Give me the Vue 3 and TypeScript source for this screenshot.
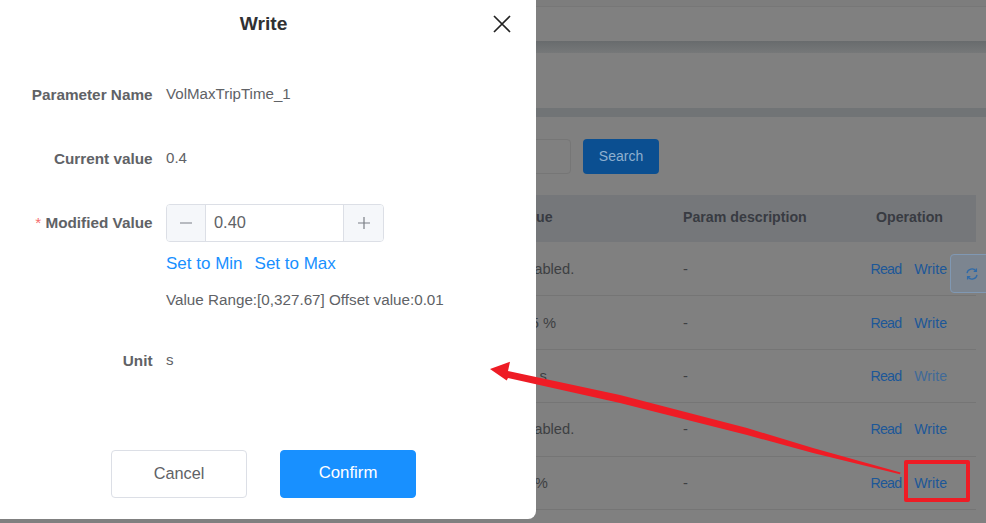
<script setup lang="ts">
interface Row { value: string; indent: number; writeClass: string }
const rows: Row[] = [
  { value: 'Not enabled.', indent: 22, writeClass: '' },
  { value: '110.05 %', indent: 26, writeClass: '' },
  { value: '10.000 s', indent: 21.5, writeClass: 'faded' },
  { value: 'Not enabled.', indent: 22, writeClass: '' },
  { value: '110.0 %', indent: 26, writeClass: '' },
]
</script>

<template>
  <div class="page">
    <div class="backdrop">
      <div class="topbar"></div>
      <div class="band band-a"></div>
      <div class="tabs"></div>
      <div class="band band-b"></div>
      <div class="content">
        <div class="search">
          <div class="search-input"></div>
          <div class="search-btn">Search</div>
        </div>
        <div class="table">
          <div class="tr th">
            <span>Param value</span>
            <span>Param description</span>
            <span class="op-head">Operation</span>
          </div>
          <div v-for="(row, i) in rows" :key="i" class="tr td">
            <span :style="{ paddingLeft: row.indent + 'px' }">{{ row.value }}</span>
            <span>-</span>
            <span class="ops">
              <a class="read">Read</a>
              <a :class="row.writeClass">Write</a>
            </span>
          </div>
        </div>
      </div>
    </div>

    <div class="refresh">
      <svg width="14" height="14" viewBox="0 0 14 14" fill="none" stroke="#2f6aa8" stroke-width="1.3">
        <path d="M2 6.2A5 5 0 0 1 11 4" />
        <path d="M11.4 1.6V4.4H8.7" />
        <path d="M12 7.8A5 5 0 0 1 3 10" />
        <path d="M2.6 12.4V9.6H5.3" />
      </svg>
    </div>

    <section class="dialog">
      <header class="d-head">
        <h2>Write</h2>
        <button class="close" aria-label="Close">
          <svg width="18" height="18" viewBox="0 0 18 18" fill="none" stroke="#222" stroke-width="1.7">
            <path d="M1 1L17 17M17 1L1 17" />
          </svg>
        </button>
      </header>

      <div class="form">
        <div class="row row-name">
          <label>Parameter Name</label>
          <div class="val">VolMaxTripTime_1</div>
        </div>
        <div class="row row-current">
          <label>Current value</label>
          <div class="val">0.4</div>
        </div>
        <div class="row row-mod">
          <label class="mod-label"><i>*</i> Modified Value</label>
          <div class="mod">
            <div class="num">
              <span class="step step-l">
                <svg width="14" height="14" viewBox="0 0 14 14" stroke="#7a7e85" stroke-width="1.2"><path d="M1 7H13" /></svg>
              </span>
              <span class="num-val">0.40</span>
              <span class="step step-r">
                <svg width="14" height="14" viewBox="0 0 14 14" stroke="#7a7e85" stroke-width="1.2"><path d="M1 7H13M7 1V13" /></svg>
              </span>
            </div>
            <div class="links"><a>Set to Min</a><a>Set to Max</a></div>
            <div class="range">Value Range:[0,327.67] Offset value:0.01</div>
          </div>
        </div>
        <div class="row row-unit">
          <label>Unit</label>
          <div class="val">s</div>
        </div>
      </div>

      <footer class="d-foot">
        <button class="btn cancel">Cancel</button>
        <button class="btn confirm">Confirm</button>
      </footer>
    </section>

    <svg class="arrow" width="986" height="523" viewBox="0 0 986 523">
      <polygon points="490,369 510,361.7 508,371 620,395 747,428 813,448 900.5,472.5 900,474.3 813,453 747,435 620,403 508,378 506.7,380.5" fill="#ee1c25" />
    </svg>
    <div class="mark"></div>
  </div>
</template>

<style scoped>
.page {
  position: relative;
  width: 986px;
  height: 523px;
  overflow: hidden;
  background: #808080;
  font-family: "Liberation Sans", Arial, sans-serif;
}

.topbar {
  height: 41px;
  background: linear-gradient(#7d7d7d 6px, #777 6px, #777 7px, #808080 7px);
}
.band { background: #717476; }
.band-a { height: 12px; background: linear-gradient(#686b6d, #767879); }
.tabs { height: 55px; }
.band-b { height: 9px; }

.content { padding: 22px 10px 0 0; }
.search { display: flex; justify-content: flex-end; padding-right: 317px; gap: 12px; }
.search-input {
  width: 120px;
  height: 35px;
  box-sizing: border-box;
  border: 1px solid #767676;
  border-radius: 4px;
}
.search-btn {
  width: 76px;
  height: 35px;
  border-radius: 4px;
  background: #0b4f91;
  color: #8fb0cf;
  font-size: 14px;
  line-height: 34px;
  text-align: center;
}

.table { margin: 21px 0 0 469px; }
.tr {
  display: grid;
  grid-template-columns: 214px 188px 105px;
  align-items: center;
}
.th {
  height: 47px;
  margin-bottom: 1px;
  background: #75777a;
  color: #383b42;
  font-size: 14.2px;
  font-weight: 700;
}
.th > span { margin-top: -4px; }
.th > .op-head { padding-left: 5px; }
.td {
  height: 53.4px;
  box-sizing: border-box;
  border-bottom: 1px solid #757575;
  color: #3d3f42;
  font-size: 14.7px;
}
.td > span:first-child { white-space: nowrap; }
.ops { display: flex; gap: 13px; font-size: 14.2px; margin-left: -0.5px; }
.ops a { color: #1c5798; }
.ops .read { letter-spacing: -0.8px; }
.ops a.faded { color: #3f6a99; }

.refresh {
  position: absolute;
  left: 950px;
  top: 254px;
  width: 48px;
  height: 39px;
  box-sizing: border-box;
  padding-left: 14px;
  display: flex;
  align-items: center;
  border: 1px solid #8098b3;
  border-radius: 4px;
  background: #7c8590;
}

.dialog {
  position: absolute;
  left: 0;
  top: 0;
  width: 536px;
  height: 519px;
  display: flex;
  flex-direction: column;
  background: #fff;
  border-bottom-right-radius: 8px;
  color: #606266;
}
.d-head {
  height: 48px;
  display: flex;
  align-items: center;
  justify-content: center;
  position: relative;
  flex: none;
}
.d-head h2 {
  margin: 0 0 0 -9px;
  font-size: 19.2px;
  font-weight: 700;
  color: #303133;
}
.close {
  position: absolute;
  left: 493px;
  top: 15px;
  width: 18px;
  height: 18px;
  padding: 0;
  border: 0;
  background: none;
  display: flex;
}

.form { flex: 1; min-height: 0; }
.row {
  display: grid;
  grid-template-columns: 152.5px 1fr;
  column-gap: 13.5px;
  font-size: 15.3px;
  line-height: 20px;
}
.row label {
  font-weight: 700;
  text-align: right;
  color: #606266;
  white-space: nowrap;
}
.val { font-size: 15.1px; color: #606266; margin-top: -1px; }
.row-name { margin-top: 37px; }
.row-current { margin-top: 44px; }
.row-mod { margin-top: 35px; }
.row .mod-label { line-height: 37px; }
.mod-label i { color: #f56c6c; font-style: normal; font-weight: 400; }
.mod { display: flex; flex-direction: column; align-items: flex-start; }
.num {
  width: 218px;
  height: 38px;
  box-sizing: border-box;
  border: 1px solid #dcdfe6;
  border-radius: 4px;
  display: flex;
  align-items: stretch;
  overflow: hidden;
}
.step {
  flex: none;
  background: #f5f7fa;
  display: flex;
  align-items: center;
  justify-content: center;
}
.step-l { width: 38px; border-right: 1px solid #dcdfe6; }
.step-r { width: 39px; border-left: 1px solid #dcdfe6; }
.num-val {
  flex: 1;
  padding-left: 8px;
  font-size: 16.4px;
  line-height: 35px;
  color: #606266;
}
.links {
  display: flex;
  gap: 12px;
  margin-top: 12px;
  font-size: 17px;
  line-height: 20px;
  color: #1890ff;
}
.range {
  margin-top: 16px;
  font-size: 15.22px;
  line-height: 20px;
  white-space: nowrap;
}
.row-unit { margin-top: 41px; }

.d-foot {
  flex: none;
  height: 69px;
  display: flex;
  gap: 33px;
  padding-left: 111px;
}
.btn {
  width: 136px;
  height: 48px;
  padding: 0 0 2px;
  border-radius: 4px;
  font-family: inherit;
  font-size: 16.3px;
  box-sizing: border-box;
}
.cancel { background: #fff; border: 1px solid #dcdfe6; color: #606266; }
.confirm { background: #1890ff; border: 1px solid #1890ff; color: #fff; font-size: 16.8px; }

.arrow { position: absolute; left: 0; top: 0; pointer-events: none; }
.mark {
  position: absolute;
  left: 904px;
  top: 460px;
  width: 66px;
  height: 42px;
  box-sizing: border-box;
  border: 4px solid #ee1c25;
  border-radius: 2px;
}
</style>

<style>
html, body { margin: 0; overflow: hidden; }
</style>
